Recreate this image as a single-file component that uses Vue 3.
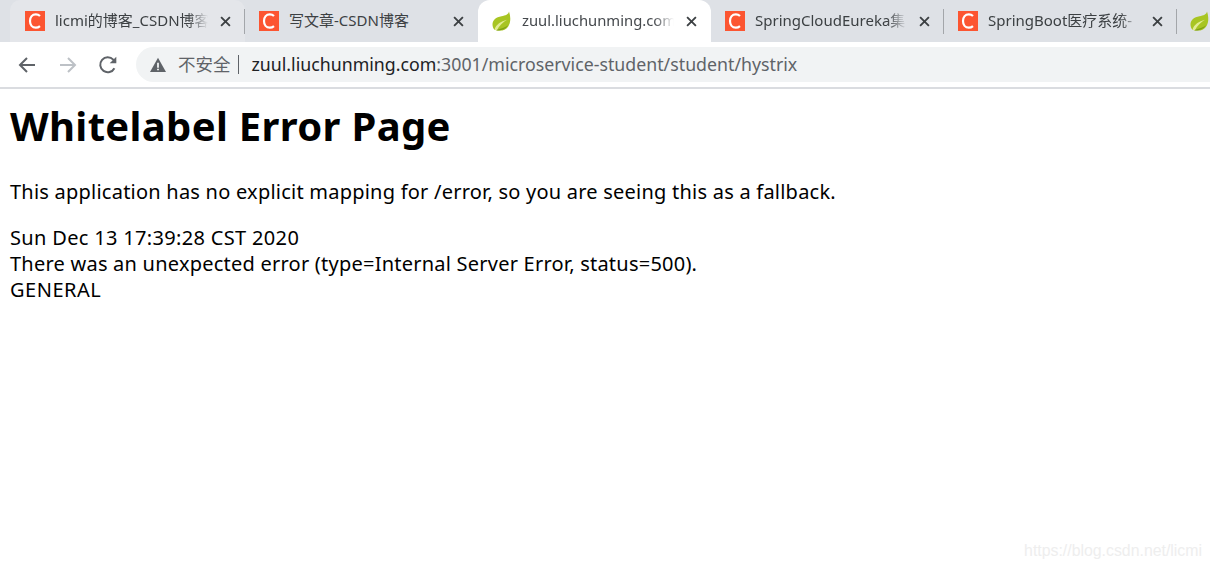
<script setup>
const tabs = [
  { id: 1, icon: 'c', title: 'licmi的博客_CSDN博客', cls: 'hover' },
  { id: 2, icon: 'c', title: '写文章-CSDN博客', cls: 'plain' },
  { id: 3, icon: 'leaf', title: 'zuul.liuchunming.com', cls: 'active' },
  { id: 4, icon: 'c', title: 'SpringCloudEureka集', cls: '' },
  { id: 5, icon: 'c', title: 'SpringBoot医疗系统-', cls: '' },
  { id: 6, icon: 'leaf', title: '', cls: 'last' }
]
</script>

<template>
  <div class="window">
    <div class="strip">
      <div v-for="t in tabs" :key="t.id" class="tab" :class="t.cls">
        <svg v-if="t.icon === 'c'" class="fav" viewBox="0 0 20 20">
          <rect width="20" height="20" fill="#fc5531" />
          <path d="M15 5A6 6 0 0 0 10.800 3.300C7.300 3.300 5 6.100 5 10s2.300 6.700 5.800 6.700c1.600 0 3-.6 4.200-1.600" fill="none" stroke="#fff" stroke-width="2.200" />
        </svg>
        <svg v-else class="fav" viewBox="0 0 20 20">
          <path d="M17 .5C16.500 3.500 13.500 4.500 9.500 5.200C4 6 .5 9 .5 13.500c0 2.200.8 4 2 5.200C6 19.800 9.500 20 12.500 18.700C18 16.300 19.800 8.500 17 .5Z" fill="#a8c522" />
          <path d="M2.500 18.700C4 13.500 9 10.300 15 8.800C11 11.500 7 14.500 5 19.300" fill="#e2ec94" />
          <path d="M4 19.300C8 19.800 13.500 18.500 16 14.200C13.500 16.200 9 17.500 4 19.300Z" fill="#7f9f16" />
        </svg>
        <span v-if="t.title" class="title">{{ t.title }}</span>
        <svg v-if="t.title" class="close" viewBox="0 0 10 10">
          <path d="M1 1l8 8M9 1l-8 8" stroke="#3c4043" stroke-width="1.700" fill="none" />
        </svg>
      </div>
    </div>

    <div class="toolbar">
      <svg class="nav" viewBox="0 0 24 24"><path d="M20 12H5.500M12 5l-7 7 7 7" fill="none" stroke="#5f6368" stroke-width="2" /></svg>
      <svg class="nav fwd" viewBox="0 0 24 24"><path d="M4 12h14.500M12 5l7 7-7 7" fill="none" stroke="#bdc1c6" stroke-width="2" /></svg>
      <svg class="nav reload" viewBox="0 0 24 24"><path d="M18.400 15.200A7.500 7.500 0 1 1 17.300 6.700L19.500 9" fill="none" stroke="#5f6368" stroke-width="2" /><path d="M20.300 3.700V10.300H13.700Z" fill="#5f6368" /></svg>
      <div class="omnibox">
        <svg class="warn" viewBox="0 0 16 16">
          <path d="M8 .8 16 15H0Z" fill="#5f6368" />
          <path d="M7.100 5.800h1.800v5H7.100zM7.100 11.700h1.800v1.600H7.100z" fill="#f1f3f4" />
        </svg>
        <span class="insecure">不安全</span>
        <span class="pipe"></span>
        <span class="url"><span class="host">zuul.liuchunming.com</span>:3001/microservice-student/student/hystrix</span>
      </div>
    </div>

    <main class="page">
      <h1>Whitelabel Error Page</h1>
      <p>This application has no explicit mapping for /error, so you are seeing this as a fallback.</p>
      <div class="details">
        <div class="line-date">Sun Dec 13 17:39:28 CST 2020</div>
        <div>There was an unexpected error (type=Internal Server Error, status=500).</div>
        <div class="line-code">GENERAL</div>
      </div>
      <span class="mark">https://blog.csdn.net/licmi</span>
    </main>
  </div>
</template>

<style>
html, body { margin: 0; background: #fff; overflow: hidden; }
</style>

<style scoped>
.window {
  position: relative;
  width: 1210px;
  height: 569px;
  overflow: hidden;
  font-family: "Noto Sans", "Noto Sans CJK SC", sans-serif;
  color: #000;
  background: #fff;
}
.strip {
  display: flex;
  height: 42px;
  padding-left: 12px;
  box-sizing: border-box;
  background: #dee1e6;
  overflow: hidden;
}
.tab {
  position: relative;
  flex: 0 0 233px;
  width: 233px;
  min-width: 0;
  box-sizing: border-box;
  height: 42px;
  display: flex;
  align-items: center;
  padding: 0 12px 0 14px;
  color: #3c4043;
}
.tab::before {
  content: "";
  position: absolute;
  left: -1px;
  top: 9px;
  height: 25px;
  width: 1px;
  background: #a3a6aa;
}
.tab.hover::before, .tab.active::before { display: none; }
.tab.active + .tab::before { display: none; }
.tab.hover {
  background: #e4e6ea;
  border-radius: 10px 10px 0 0;
  margin-left: -2px;
  padding-left: 15px;
  flex-basis: 235px;
  width: 235px;
}
.tab.active {
  background: #fff;
  color: #45494d;
  border-radius: 12px 12px 0 0;
}
.tab.last { flex: 0 0 33px; width: 33px; padding-left: 13px; }
.fav { width: 20px; height: 20px; flex: none; }
.title {
  flex: 1;
  min-width: 0;
  margin-left: 10px;
  margin-top: -2px;
  font-size: 15px;
  line-height: 20px;
  white-space: nowrap;
  overflow: hidden;
  -webkit-mask-image: linear-gradient(to right, #000 calc(100% - 22px), transparent calc(100% - 2px));
  mask-image: linear-gradient(to right, #000 calc(100% - 22px), transparent calc(100% - 2px));
}
.plain .title { -webkit-mask-image: none; mask-image: none; }
.active .title { font-size: 14.8px; }
.close { width: 11px; height: 11px; margin-left: 10px; margin-right: 2px; flex: none; }
.toolbar {
  display: flex;
  align-items: center;
  height: 45px;
  box-sizing: border-box;
  padding: 0 0 0 15px;
  background: #fff;
}
.nav { width: 24px; height: 24px; flex: none; margin-right: 17px; }
.nav.fwd { margin-right: 16px; }
.nav.reload { margin-right: 16px; }
.omnibox {
  flex: 1;
  height: 35px;
  display: flex;
  align-items: center;
  background: #f1f3f4;
  border-radius: 18px 0 0 18px;
  padding-left: 14px;
  min-width: 0;
  white-space: nowrap;
}
.warn { width: 16px; height: 16px; flex: none; }
.insecure { margin-left: 12px; margin-top: -2px; font-size: 17.5px; color: #5f6368; line-height: 24px; }
.pipe { width: 1px; height: 19px; margin: 0 12px 0 7px; background: #5f6368; }
.url { margin-top: -2px; margin-left: 1px; font-size: 17.75px; line-height: 24px; color: #5f6368; }
.host { color: #202124; }
.page {
  border-top: 2px solid #dadce0;
  padding: 0 10px;
  height: 480px;
  box-sizing: border-box;
}
h1 {
  margin: 13px 0 0;
  font-size: 40px;
  line-height: 48px;
  font-weight: 700;
  letter-spacing: 0.33px;
}
p {
  margin: 29px 0 0;
  font-size: 20px;
  line-height: 26px;
  letter-spacing: 0.23px;
}
.details {
  margin-top: 20px;
  font-size: 20px;
  line-height: 26px;
  letter-spacing: 0.23px;
}
.line-date { letter-spacing: 0.33px; }
.line-code { letter-spacing: 0.5px; }
.mark {
  position: absolute;
  right: 8px;
  bottom: 9px;
  font-family: "Liberation Sans", sans-serif;
  font-size: 15.85px;
  line-height: 18px;
  color: #eeeeee;
}
</style>
